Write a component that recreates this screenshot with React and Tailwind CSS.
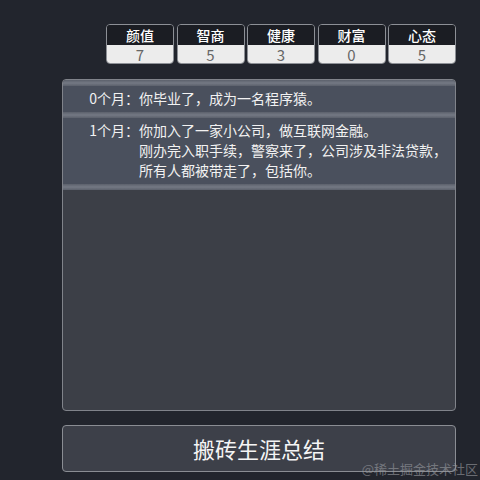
import React from 'react';

const stats = [
  { name: '颜值', value: 7 },
  { name: '智商', value: 5 },
  { name: '健康', value: 3 },
  { name: '财富', value: 0 },
  { name: '心态', value: 5 },
];

const logs = [
  { month: '0个月：', lines: ['你毕业了，成为一名程序猿。'] },
  {
    month: '1个月：',
    lines: [
      '你加入了一家小公司，做互联网金融。',
      '刚办完入职手续，警察来了，公司涉及非法贷款，',
      '所有人都被带走了，包括你。',
    ],
  },
];

function StatBox({ name, value }) {
  return (
    <div className="w-[68px] h-[40px] flex flex-col rounded-[4px] border border-[#8d9096] overflow-hidden">
      <div className="h-[20px] bg-[#1b1d23] text-white text-[14px] font-medium leading-[20px] text-center">{name}</div>
      <div className="h-[19px] bg-[#ececec] text-[#666] text-[15px] leading-[19px] text-center">{value}</div>
    </div>
  );
}

function LogRow({ month, lines, last }) {
  return (
    <div>
      <div className="h-[6px] bg-gradient-to-b from-[#5c616c] via-[#747984] to-[#5c616c]" />
      <div className="flex bg-[#4a505d] pt-[2px] pb-[4px] text-[14px] leading-[20px] text-[#f2f2f2]">
        <div className="w-[76px] shrink-0 text-right">{month}</div>
        <div className="flex flex-col whitespace-nowrap">
          {lines.map((line, i) => (
            <div key={i}>{line}</div>
          ))}
        </div>
      </div>
      {last && <div className="h-[6px] bg-gradient-to-b from-[#5c616c] via-[#747984] to-[#5c616c]" />}
    </div>
  );
}

export default function App() {
  return (
    <div
      className="relative w-[480px] h-[480px] bg-[#22252d] overflow-hidden"
      style={{ fontFamily: '"Noto Sans CJK SC", "Noto Sans", sans-serif' }}
    >
      <div className="flex flex-col pl-[62px] pr-[24px] pt-[24px] w-[480px]">
        <div className="flex justify-end gap-[2.5px]">
          {stats.map((s) => (
            <StatBox key={s.name} name={s.name} value={s.value} />
          ))}
        </div>

        <div className="mt-[15px] h-[332px] rounded-[4px] border border-[#80838a] bg-[#3c3f47] overflow-hidden">
          {logs.map((log, i) => (
            <LogRow key={i} month={log.month} lines={log.lines} last={i === logs.length - 1} />
          ))}
        </div>

        <button className="mt-[14px] h-[47px] rounded-[4px] border border-[#8a8d93] bg-[#3d4049] text-[#f5f5f5] text-[22px]">
          搬砖生涯总结
        </button>
      </div>

      <div className="absolute right-[2px] bottom-[4px] text-[13px] leading-[14px] text-[#9a9ca1] opacity-60">@稀土掘金技术社区</div>
    </div>
  );
}
